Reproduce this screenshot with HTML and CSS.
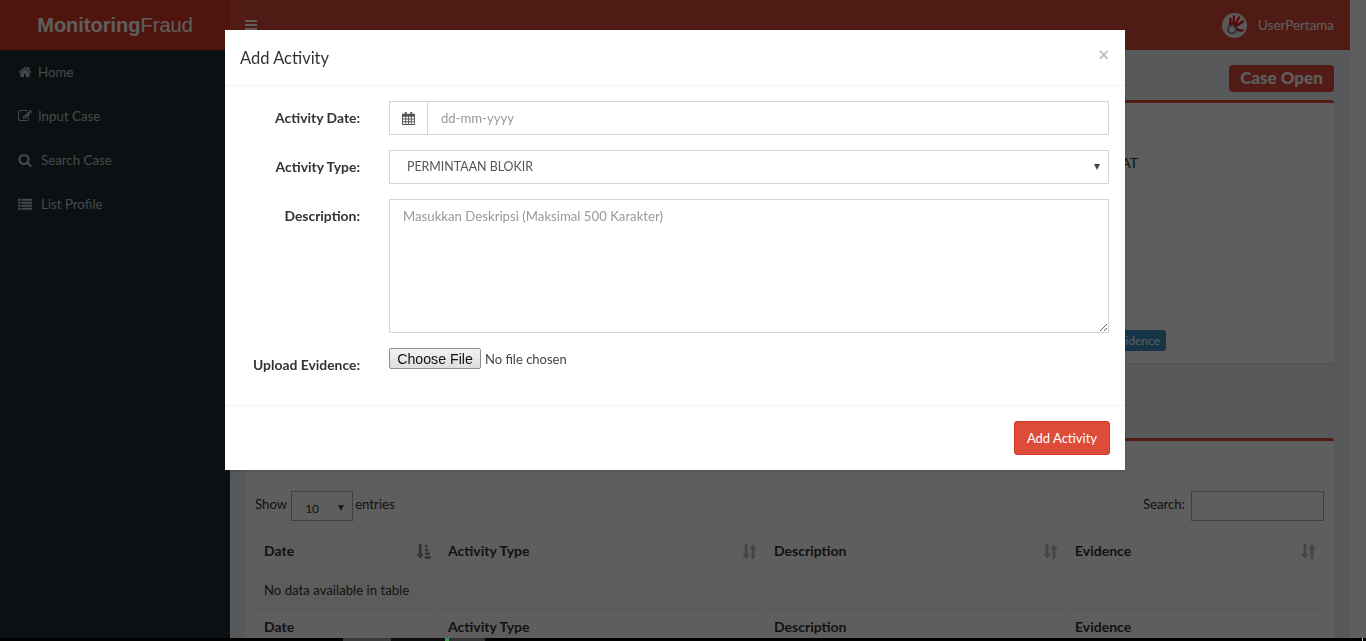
FILE: index.html
```html
<!DOCTYPE html>
<html lang="id">
<head>
<meta charset="utf-8">
<title>Monitoring Fraud</title>
<link rel="stylesheet" href="styles.css">
</head>
<body>
<div class="page">
  <div class="app">
    <aside class="sidebar">
      <a class="logo"><b>Monitoring</b>Fraud</a>
      <nav class="menu">
        <a class="menu-item"><svg class="menu-icon" viewBox="0 0 1792 1792"><path d="M1472 992v480q0 26-19 45t-45 19h-384v-384h-256v384h-384q-26 0-45-19t-19-45v-480q0-1 .5-3t.5-3l575-474 575 474q1 2 1 6zm223-69l-62 74q-8 9-21 11h-3q-13 0-21-7l-692-577-692 577q-12 8-24 7-13-2-21-11l-62-74q-8-10-7-23.500t11-21.500l719-599q32-26 76-26t76 26l244 204v-195q0-14 9-23t23-9h192q14 0 23 9t9 23v408l219 182q10 8 11 21.500t-7 23.500z"/></svg><span>Home</span></a>
        <a class="menu-item"><svg class="menu-icon" viewBox="0 0 1792 1792"><path d="M888 1184l116-116-152-152-116 116v56h96v96h56zm440-720q-16-16-33 1l-350 350q-17 17-1 33t33-1l350-350q17-17 1-33zm80 594v190q0 119-84.500 203.500t-203.500 84.500h-832q-119 0-203.500-84.500t-84.500-203.500v-832q0-119 84.500-203.500t203.500-84.500h832q63 0 117 25 15 7 18 23 3 17-9 29l-49 49q-14 14-32 8-23-6-45-6h-832q-66 0-113 47t-47 113v832q0 66 47 113t113 47h832q66 0 113-47t47-113v-126q0-13 9-22l64-64q15-15 35-7t20 29zm-96-738l288 288-672 672h-288v-288zm444 132l-92 92-288-288 92-92q28-28 68-28t68 28l152 152q28 28 28 68t-28 68z"/></svg><span>Input Case</span></a>
        <a class="menu-item wide"><svg class="menu-icon" viewBox="0 0 1792 1792"><path d="M1216 832q0-185-131.500-316.500t-316.500-131.500-316.500 131.500-131.500 316.500 131.500 316.500 316.500 131.500 316.500-131.500 131.500-316.500zm512 832q0 52-38 90t-90 38q-54 0-90-38l-343-342q-179 124-399 124-143 0-273.500-55.500t-225-150-150-225-55.500-273.500 55.500-273.500 150-225 225-150 273.500-55.500 273.500 55.500 225 150 150 225 55.500 273.500q0 220-124 399l343 343q37 37 37 90z"/></svg><span>Search Case</span></a>
        <a class="menu-item wide"><svg class="menu-icon" viewBox="0 0 16 16"><path d="M0 2h3v2.300H0zM4 2h12v2.300H4zM0 5.400h3v2.300H0zM4 5.400h12v2.300H4zM0 8.800h3v2.300H0zM4 8.800h12v2.300H4zM0 12.200h3v2.300H0zM4 12.200h12v2.300H4z"/></svg><span>List Profile</span></a>
      </nav>
    </aside>

    <div class="main">
      <header class="navbar">
        <svg class="bars" viewBox="0 0 12 12"><path d="M0 1h12v2H0zM0 5h12v2H0zM0 9h12v2H0z"/></svg>
        <div class="user">
          <svg class="avatar" viewBox="0 0 25 25">
            <circle cx="12.500" cy="12.500" r="12.500" fill="#f2f2f2"/>
            <g class="fingers">
              <path d="M8 11 L8.500 6"/>
              <path d="M11.500 9.500 L12 3.500"/>
              <path d="M14 10 L17 4.500"/>
              <path d="M15.500 12 L21 8.500"/>
              <path d="M13.500 14 Q15 18 20.500 17.500"/>
              <path d="M8 11 Q11 9.500 13.500 11.500 L13.500 14"/>
            </g>
            <circle class="ring" cx="10" cy="16.500" r="4"/>
          </svg>
          <span>UserPertama</span>
        </div>
      </header>
      <main class="content">
        <div class="status-row"><span class="status">Case Open</span></div>
        <section class="box case-box">
          <div class="case-details">
            <p class="case-text">ALAMAT</p>
            <a class="btn-evidence">Upload Evidence</a>
          </div>
        </section>
        <section class="box list-box">
          <div class="dt-controls">
            <label class="dt-label">Show
              <span class="select-wrap dt-length"><select class="dt-select"><option>10</option></select></span>
              entries</label>
            <label class="dt-label">Search: <input class="dt-search" type="text"></label>
          </div>
          <table class="dt">
            <colgroup><col class="c1"><col class="c2"><col class="c3"><col class="c4"></colgroup>
            <thead>
              <tr>
                <th><div class="th-in">Date<svg class="sort active" viewBox="0 0 16 16"><path d="M3 0h3v10.500h2.500L4.500 16 .5 10.500H3zM9.500 1h2.500v2.800H9.500zM9.500 5h3.800v2.800H9.500zM9.500 9h5v2.800h-5zM9.500 13H16v2.800H9.500z"/></svg></div></th>
                <th><div class="th-in">Activity Type<svg class="sort" viewBox="0 0 16 16"><path d="M2.800 0h3v10.500h2.500L4.300 16 .3 10.500h2.500zM10.200 16v-10.500H7.700L11.700 0l4 5.500h-2.500V16z"/></svg></div></th>
                <th><div class="th-in">Description<svg class="sort" viewBox="0 0 16 16"><path d="M2.800 0h3v10.500h2.500L4.300 16 .3 10.500h2.500zM10.200 16v-10.500H7.700L11.700 0l4 5.500h-2.500V16z"/></svg></div></th>
                <th><div class="th-in">Evidence<svg class="sort" viewBox="0 0 16 16"><path d="M2.800 0h3v10.500h2.500L4.300 16 .3 10.500h2.500zM10.200 16v-10.500H7.700L11.700 0l4 5.500h-2.500V16z"/></svg></div></th>
              </tr>
            </thead>
            <tbody><tr><td colspan="4">No data available in table</td></tr></tbody>
            <tfoot><tr><th>Date</th><th>Activity Type</th><th>Description</th><th>Evidence</th></tr></tfoot>
          </table>
        </section>
      </main>
    </div>
    <div class="scrollbar"></div>
  </div>
  <div class="taskbar">
    <i class="seg s1"></i><i class="seg s2"></i><i class="seg s3"></i><i class="seg s4"></i><i class="seg s5"></i><i class="seg s6"></i><i class="seg s7"></i>
  </div>
</div>

<div class="backdrop"></div>
<div class="modal">
  <div class="modal-header">
    <h4 class="modal-title">Add Activity</h4>
    <button class="close" type="button">×</button>
  </div>
  <form class="modal-body">
    <label class="field-label">Activity Date:</label>
    <div class="input-group">
      <span class="addon"><svg class="cal" viewBox="0 0 14 14"><path d="M3 0h2v3H3zM9 0h2v3H9z"/><path fill-rule="evenodd" d="M0 2h14v12H0zM1 5v2h2.500V5zm3.500 0v2h2V5zm3 0v2h2V5zm3 0v2H13V5zM1 8v2h2.500V8zm3.500 0v2h2V8zm3 0v2h2V8zm3 0v2H13V8zM1 11v2h2.500v-2zm3.500 0v2h2v-2zm3 0v2h2v-2zm3 0v2H13v-2z"/></svg></span>
      <input class="control date" type="text" placeholder="dd-mm-yyyy">
    </div>
    <label class="field-label">Activity Type:</label>
    <span class="select-wrap"><select class="control type"><option>PERMINTAAN BLOKIR</option></select></span>
    <label class="field-label">Description:</label>
    <textarea class="control desc" placeholder="Masukkan Deskripsi (Maksimal 500 Karakter)"></textarea>
    <label class="field-label">Upload Evidence:</label>
    <input class="file" type="file">
  </form>
  <div class="modal-footer"><button class="btn-add" type="button">Add Activity</button></div>
</div>
</body>
</html>
```
FILE: styles.css
```css
* { box-sizing: border-box; }
html, body { margin: 0; height: 641px; overflow: hidden; }
body {
  font-family: Lato, "Noto Sans", sans-serif;
  font-size: 13.200px;
  line-height: 20px;
  color: #333;
  background: #ecf0f5;
}
.page { height: 641px; display: flex; flex-direction: column; overflow: hidden; }
.app { flex: 1; min-height: 0; display: flex; }

/* sidebar */
.sidebar { width: 230px; flex: none; background: #222d32; }
.logo {
  display: block;
  height: 50px;
  background: #d73925;
  color: #fff;
  font: 20px/50px "Liberation Sans", Arial, sans-serif;
  text-align: center;
}
.menu-item {
  height: 44px;
  display: flex;
  align-items: center;
  gap: 6px;
  padding-left: 18px;
  color: #b8c7ce;
  font-size: 13.300px;
}
.menu-item.wide { gap: 9px; }
.menu-icon { width: 14px; height: 14px; fill: currentColor; flex: none; }

/* main */
.main { flex: 1; min-width: 0; display: flex; flex-direction: column; }
.navbar {
  height: 50px;
  flex: none;
  background: #d84a38;
  display: flex;
  align-items: center;
  justify-content: space-between;
  padding: 0 16px 0 15px;
  color: #fff;
}
.bars { width: 12px; height: 12px; fill: #fff; }
.user { display: flex; align-items: center; gap: 11px; font-size: 13.400px; }
.avatar { width: 25px; height: 25px; }
.fingers { fill: none; stroke: #f01010; stroke-width: 2.300; stroke-linecap: round; }
.ring { fill: none; stroke: #888; stroke-width: 2; }

.content { flex: 1; min-height: 0; overflow: hidden; padding: 15px 16px 0 15px; }
.status-row { display: flex; justify-content: flex-end; margin-bottom: 8px; }
.status {
  height: 27px;
  width: 105px;
  border-radius: 4px;
  background: #dd4b39;
  color: #fff;
  font-size: 17px;
  font-weight: 900;
  line-height: 25px;
  text-align: center;
}
.box {
  background: #fff;
  border-top: 3px solid #dd4b39;
  border-radius: 3px;
  box-shadow: 0 1px 1px rgba(0,0,0,.1);
}
.case-box { height: 263px; margin-bottom: 75px; }
.case-details {
  width: 921px;
  padding-top: 50px;
  display: flex;
  flex-direction: column;
  align-items: flex-end;
}
.case-text { margin: 0 28px 157px 0; font-size: 14px; }
.btn-evidence {
  height: 21px;
  padding: 0 6px;
  border-radius: 3px;
  background: #3c8dbc;
  color: #fff;
  font-size: 12px;
  line-height: 21px;
}
.list-box { padding: 50px 10px 0; }
.dt-controls { display: flex; justify-content: space-between; height: 30px; margin-bottom: 12px; }
.dt-label { display: flex; align-items: flex-start; gap: 3px; height: 30px; line-height: 27px; }
.dt-length { width: 62px; height: 30px; margin: 0 -1px 0 1px; }
.dt-length::after { right: 7px; top: 12px; }
.dt-select {
  appearance: none;
  display: block;
  width: 62px;
  height: 30px;
  padding: 5px 0 0 13px;
  border: 1px solid #aaa;
  background: #fff;
  font-family: inherit;
  font-size: 12px;
  color: #333;
}
.dt-search { display: block; width: 133px; height: 30px; border: 1px solid #aaa; margin-left: 3px; }
.dt { width: 1069px; border-collapse: collapse; table-layout: fixed; }
.c1 { width: 184px; } .c2 { width: 326px; } .c3 { width: 301px; } .c4 { width: 258px; }
.dt th, .dt td { border: 1px solid #f4f4f4; padding: 8px; text-align: left; }
.dt th { font-size: 14px; }
.dt thead th { height: 37px; padding: 0 8px 2px; }
.dt tbody td { height: 39px; background: #f9f9f9; }
.dt tfoot th { height: 37px; padding: 7px 8px; vertical-align: top; }
.th-in { display: flex; justify-content: space-between; align-items: center; }
.sort { width: 15px; height: 15px; fill: #bbb; flex: none; margin: 1px 0 0; }
.sort.active { fill: #888; }

.scrollbar { width: 16px; flex: none; background: #fff; }
.taskbar { height: 3px; flex: none; display: flex; background: #000; position: relative; z-index: 20; }
.seg { display: block; height: 3px; flex: none; }
.s1 { width: 343px; }
.s2 { width: 48px; background: #3a3a3a; }
.s3 { width: 54px; background: #0c0c0c; }
.s4 { width: 4px; background: #3c9a40; }
.s5 { width: 36px; background: #333; }
.s6 { width: 877px; }
.s7 { width: 1px; background: #ccc; }

/* overlay + modal */
.backdrop { position: fixed; inset: 0; background: rgba(0,0,0,.63); z-index: 10; }
.modal {
  position: fixed;
  top: 30px;
  left: 225px;
  width: 900px;
  height: 440px;
  background: #fff;
  box-shadow: 0 2px 3px rgba(0,0,0,.125);
  z-index: 30;
}
.modal-header {
  height: 56px;
  padding: 15px;
  border-bottom: 1px solid #f4f4f4;
  display: flex;
  justify-content: space-between;
  align-items: center;
}
.modal-title { margin: 0; font-size: 16.500px; font-weight: 400; line-height: 26px; }
.close {
  border: 0;
  padding: 0;
  background: none;
  color: #c4c4c4;
  font: 700 18px/18px "Liberation Sans", sans-serif;
  margin: -6px 1px 0 0;
}
.modal-body {
  height: 320px;
  padding: 15px 16px 0 15px;
  border-bottom: 1px solid #f4f4f4;
  display: grid;
  grid-template-columns: 120px 720px;
  grid-template-rows: 34px 34px 134px 34px;
  column-gap: 29px;
  row-gap: 15px;
}
.field-label { padding-top: 7px; font-size: 13.900px; font-weight: 700; text-align: right; }
.input-group { display: flex; height: 34px; }
.addon {
  width: 38px;
  flex: none;
  border: 1px solid #d2d6de;
  border-right: 0;
  display: flex;
  align-items: center;
  justify-content: center;
}
.cal { width: 13px; height: 13px; fill: #555; }
.control {
  display: block;
  width: 100%;
  border: 1px solid #d2d6de;
  background: #fff;
  color: #555;
  font: inherit;
  outline: 0;
}
.date { height: 34px; padding: 0 12px 0 13px; font-size: 13.100px; }
.control::placeholder { color: #999; opacity: 1; }
.select-wrap { position: relative; display: block; height: 34px; }
.select-wrap::after {
  content: "";
  position: absolute;
  right: 9px;
  top: 14px;
  border: 3.500px solid transparent;
  border-top: 6px solid #444;
  border-bottom: 0;
  pointer-events: none;
}
.type { appearance: none; height: 34px; padding: 0 0 0 17px; font-size: 12.400px; }
.desc { height: 134px; padding: 6px 13px; resize: both; }
.file { display: block; height: 34px; font-family: inherit; font-size: 13px; color: #444; }
.file::file-selector-button {
  height: 21px;
  width: 92px;
  margin-right: 4px;
  padding: 0;
  border: 1px solid #8f8f8f;
  border-radius: 2px;
  background: linear-gradient(#f2f2f2, #dedede);
  color: #111;
  font: 14.200px "Liberation Sans", sans-serif;
}
.modal-footer { height: 64px; padding: 15px; display: flex; justify-content: flex-end; }
.btn-add {
  width: 96px;
  height: 34px;
  border: 1px solid #d73925;
  border-radius: 3px;
  background: #dd4b39;
  color: #fff;
  font-family: inherit;
  font-size: 13px;
}
```
